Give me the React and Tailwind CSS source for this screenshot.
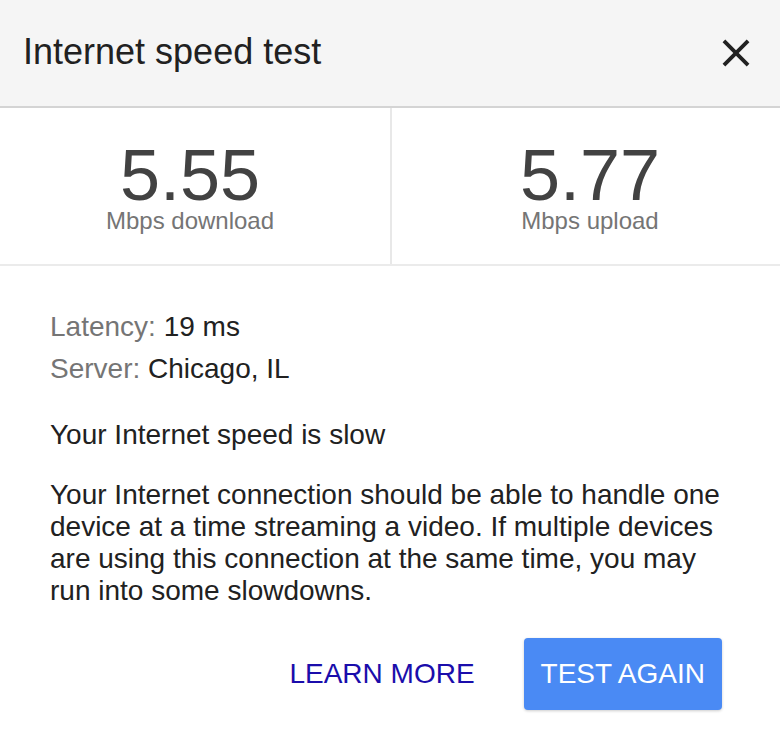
export default function App() {
  return (
    <div className="min-h-screen w-[780px] bg-white font-['Liberation_Sans',Arial,sans-serif]">
      {/* header */}
      <div className="flex h-[106px] items-center justify-between bg-[#f5f5f5] pb-[3px] pl-[23px] pr-[21px]">
        <h1 className="text-[36px] leading-none text-[#212121]">Internet speed test</h1>
        <button className="mt-[3px] text-[#212121]">
          <svg width="46" height="46" viewBox="0 0 24 24" fill="currentColor">
            <path d="M19 6.41L17.59 5 12 10.59 6.41 5 5 6.41 10.59 12 5 17.59 6.41 19 12 13.41 17.59 19 19 17.59 13.41 12z" />
          </svg>
        </button>
      </div>
      <div className="h-[2px] bg-[#d4d4d4]" />

      {/* results */}
      <div className="grid h-[158px] grid-cols-[392px_1fr] border-b-2 border-[#ebebeb]">
        <div className="flex flex-col items-center border-r-2 border-[#e8e8e8] pr-[10px] pt-[35px]">
          <div className="text-[72px] leading-[64px] text-[#424242]">5.55</div>
          <div className="text-[24px] leading-[28px] text-[#757575]">Mbps download</div>
        </div>
        <div className="flex flex-col items-center pl-[8px] pt-[35px]">
          <div className="text-[72px] leading-[64px] text-[#424242]">5.77</div>
          <div className="text-[24px] leading-[28px] text-[#757575]">Mbps upload</div>
        </div>
      </div>

      {/* details */}
      <div className="px-[50px] pt-10 text-[28px] text-[#212121]">
        <div className="leading-[42px]">
          <span className="text-[#757575]">Latency:</span> 19 ms
        </div>
        <div className="leading-[42px]">
          <span className="text-[#757575]">Server:</span> Chicago, IL
        </div>
        <p className="mt-[29px] leading-[32px]">Your Internet speed is slow</p>
        <p className="mt-[28px] leading-[32px]">
          Your Internet connection should be able to handle one device at a time streaming a
          video. If multiple devices are using this connection at the same time, you may run
          into some slowdowns.
        </p>
      </div>

      <div className="mt-[31px] flex items-center justify-end gap-8 pr-[58px]">
        <button className="h-[72px] px-[17px] text-[28px] text-[#1a0dab]">LEARN MORE</button>
        <button className="h-[72px] rounded-[4px] bg-[#4a8af4] px-[17px] text-[28px] text-white shadow-[0_1px_3px_rgba(0,0,0,0.2)]">
          TEST AGAIN
        </button>
      </div>
    </div>
  );
}
